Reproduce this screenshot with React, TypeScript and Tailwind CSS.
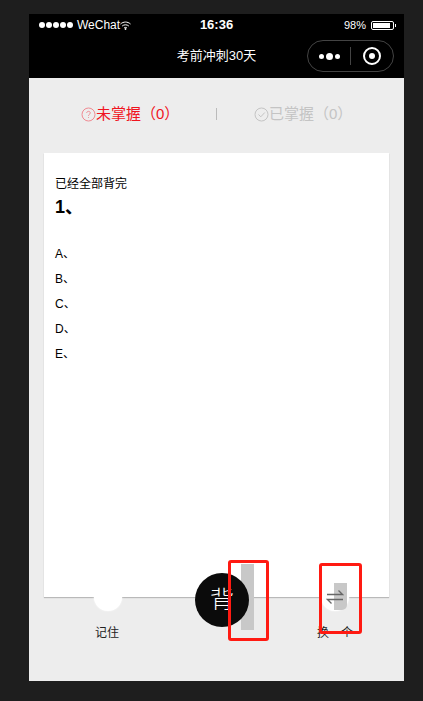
const font = { fontFamily: '"Liberation Sans", "Noto Sans CJK SC", sans-serif' }

const StatusBar = () => (
  <div className="flex h-[22px] items-center justify-between pl-[10px] pr-[8px] text-[12px] text-white">
    <div className="flex w-[120px] items-center">
      <div className="flex gap-[1px]">
        {[0, 1, 2, 3, 4].map((i) => (
          <span key={i} className="h-[6px] w-[6px] rounded-full bg-white" />
        ))}
      </div>
      <span className="ml-[4px] text-[12px]">WeChat</span>
      <svg width="11" height="9" viewBox="0 0 11 9" fill="none" stroke="white">
        <path d="M0.5 3 C3.5 0.4 7.5 0.4 10.5 3" />
        <path d="M2.2 5 C4 3.4 7 3.4 8.8 5" />
        <path d="M4 7 C5 6.2 6 6.2 7 7" />
        <circle cx="5.5" cy="8" r="0.6" fill="white" />
      </svg>
    </div>
    <span className="mr-[2px] text-[13px] font-bold">16:36</span>
    <div className="flex w-[120px] items-center justify-end">
      <span className="text-[11px]">98%</span>
      <div className="ml-[5px] flex h-[9px] w-[23px] items-center rounded-[2px] border border-white p-[1px]">
        <div className="h-full w-[90%] bg-white" />
      </div>
      <div className="ml-[1px] h-[3px] w-[1px] bg-white" />
    </div>
  </div>
)

const NavBar = () => (
  <div className="relative flex h-[42px] items-center justify-center pb-[2px] text-[13px] text-white">
    <span>考前冲刺30天</span>
    <div className="absolute right-[10px] top-[4px] flex h-[32px] w-[87px] items-center rounded-full border border-[#444]">
      <div className="flex w-[42px] items-center justify-center gap-[2px]">
        <span className="h-[5px] w-[5px] rounded-full bg-white" />
        <span className="h-[7px] w-[7px] rounded-full bg-white" />
        <span className="h-[5px] w-[5px] rounded-full bg-white" />
      </div>
      <div className="h-[18px] w-px bg-[#444]" />
      <div className="flex flex-1 items-center justify-center">
        <div className="flex h-[18px] w-[18px] items-center justify-center rounded-full border-2 border-white">
          <span className="h-[6px] w-[6px] rounded-full bg-white" />
        </div>
      </div>
    </div>
  </div>
)

const Tabs = () => (
  <div className="flex h-[75px] items-center pb-[3px] pl-[52px] text-[15px]">
    <div className="flex w-[98px] shrink-0 items-center whitespace-nowrap text-[#f0141e]">
      <svg className="shrink-0" width="15" height="15" viewBox="0 0 15 15" fill="none" stroke="#f08a92">
        <circle cx="7.5" cy="7.5" r="6.5" />
        <path d="M5.7 6 C5.7 3.8 9.3 3.8 9.3 6 C9.3 7.3 7.5 7.3 7.5 8.8" />
        <path d="M7.5 10.2 V11" />
      </svg>
      <span>未掌握（0）</span>
    </div>
    <div className="ml-[37px] h-[12px] w-px bg-[#bbb]" />
    <div className="ml-[37px] flex w-[98px] shrink-0 items-center whitespace-nowrap text-[#c4c4c4]">
      <svg className="shrink-0" width="15" height="15" viewBox="0 0 15 15" fill="none" stroke="#c4c4c4">
        <circle cx="7.5" cy="7.5" r="6.5" />
        <path d="M4.5 7.5 L6.8 9.8 L10.8 5.5" />
      </svg>
      <span>已掌握（0）</span>
    </div>
  </div>
)

const Card = () => (
  <div className="mx-[15px] h-[444px] bg-white px-[11px] pt-[23px] text-black shadow-[0_1px_1px_rgba(0,0,0,0.22)]">
    <div className="text-[12px] leading-[17px]">已经全部背完</div>
    <div className="mt-[3px] text-[18px] font-bold leading-[23px]">1、</div>
    <div className="mt-[23px] flex flex-col text-[12px] leading-[25px]">
      {['A', 'B', 'C', 'D', 'E'].map((opt) => (
        <div key={opt}>{opt}、</div>
      ))}
    </div>
  </div>
)

const ActionBar = () => (
  <div className="relative z-10 mt-[-14px] flex items-start pl-[65px]">
    <div className="flex w-[28px] flex-col items-center">
      <div className="h-[28px] w-[28px] rounded-full bg-white shadow-[0_0_2px_rgba(255,255,255,0.9)]" />
      <span className="mr-[2px] mt-[14px] whitespace-nowrap text-[12px] leading-[17px] text-[#222]">记住</span>
    </div>
    <div className="ml-[73px] mt-[-10px] flex h-[54px] w-[54px] items-center justify-center rounded-full bg-[#0b0b0b] text-[24px] font-light text-white">
      背
    </div>
    <div className="ml-[72px] flex w-[28px] flex-col items-center">
      <div className="relative flex h-[28px] w-[28px] items-center justify-center rounded-full bg-white shadow-[0_0_2px_rgba(255,255,255,0.9)]">
        <div className="absolute left-[13px] top-0 h-[27px] w-[13px] rounded-br-[5px] bg-[#c8c8c8]" />
        <svg className="relative" width="18" height="16" viewBox="0 0 18 16" fill="none" stroke="#666" strokeWidth="1.3">
          <path d="M1 5.5 H16.5 L12.5 1.5" />
          <path d="M17 10.5 H1.5 L5.5 14.5" />
        </svg>
      </div>
      <span className="mt-[14px] whitespace-nowrap text-[12px] leading-[17px] text-[#222]">换一个</span>
    </div>
  </div>
)

export default function App() {
  return (
    <div className="relative h-[701px] w-[423px] overflow-hidden bg-[#1e1e1e] pl-[29px] pt-[14px]" style={font}>
      <div className="flex h-[667px] w-[375px] flex-col bg-[#ededed]">
        <div className="bg-black">
          <StatusBar />
          <NavBar />
        </div>
        <Tabs />
        <Card />
        <ActionBar />
      </div>
      {/* grey block sits under the round button, red markup over everything */}
      <div className="absolute left-[241px] top-[564px] h-[66px] w-[13px] bg-[#c8c8c8]" />
      <div className="absolute left-[228px] top-[560px] z-20 h-[81px] w-[41px] rounded-[3px] border-[3px] border-[#ff1a12]" />
      <div className="absolute left-[319px] top-[563px] z-20 h-[71px] w-[43px] rounded-[3px] border-[3px] border-[#ff1a12]" />
    </div>
  )
}
